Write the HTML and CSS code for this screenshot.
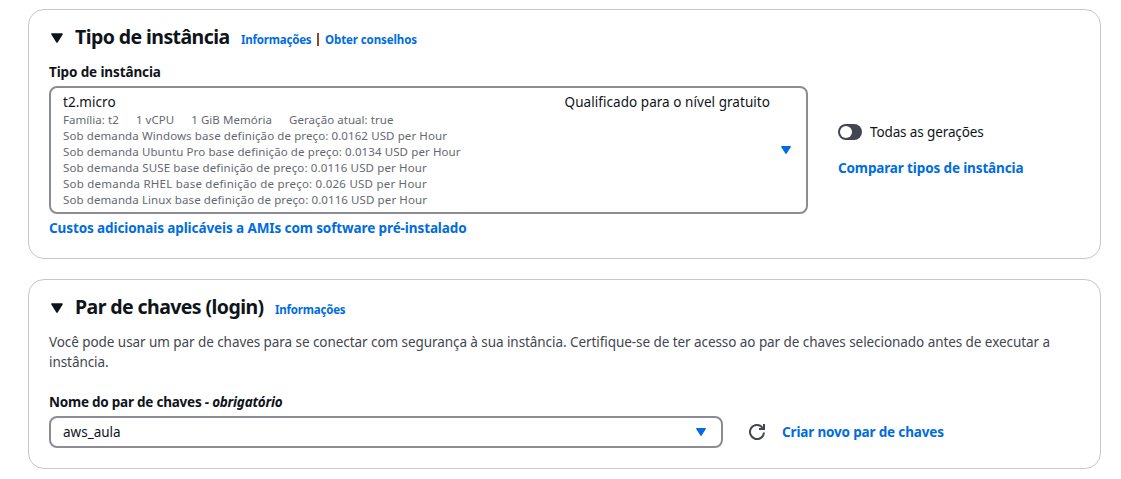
FILE: index.html
```html
<!DOCTYPE html>
<html lang="pt-BR">
<head>
<meta charset="utf-8">
<title>Executar uma instância</title>
<link rel="stylesheet" href="styles.css">
</head>
<body>
<main class="page">
  <section class="card card-type">
    <header class="card-header">
      <svg class="toggle-caret" width="12" height="10" viewBox="0 0 12 10"><path d="M1 1h10L6 9z" fill="#0f141a" stroke="#0f141a" stroke-width="1.6" stroke-linejoin="round"/></svg>
      <h2 class="title title-type">Tipo de instância</h2>
      <a class="info">Informações</a>
      <span class="divider"></span>
      <a class="info info-advice">Obter conselhos</a>
    </header>
    <div class="type-row">
      <div class="type-field">
        <div class="label label-type">Tipo de instância</div>
        <div class="select select-type">
          <div class="option">
            <div class="option-top"><span class="option-name">t2.micro</span><span class="option-tag">Qualificado para o nível gratuito</span></div>
            <div class="specs"><span>Família: t2</span><span>1 vCPU</span><span>1 GiB Memória</span><span>Geração atual: true</span></div>
            <div class="price">Sob demanda Windows base definição de preço: 0.0162 USD per Hour</div>
            <div class="price">Sob demanda Ubuntu Pro base definição de preço: 0.0134 USD per Hour</div>
            <div class="price price-suse">Sob demanda SUSE base definição de preço: 0.0116 USD per Hour</div>
            <div class="price price-rhel">Sob demanda RHEL base definição de preço: 0.026 USD per Hour</div>
            <div class="price">Sob demanda Linux base definição de preço: 0.0116 USD per Hour</div>
          </div>
          <svg class="select-caret" width="10" height="8" viewBox="0 0 10 8"><path d="M.7.7h8.6L5 7.3z" fill="#006ce0" stroke="#006ce0" stroke-width="1.2" stroke-linejoin="round"/></svg>
        </div>
        <a class="link link-costs">Custos adicionais aplicáveis a AMIs com software pré-instalado</a>
      </div>
      <div class="type-side">
        <div class="switch-row"><span class="switch"><span class="knob"></span></span><span class="switch-label">Todas as gerações</span></div>
        <a class="link link-compare">Comparar tipos de instância</a>
      </div>
    </div>
  </section>

  <section class="card card-key">
    <header class="card-header">
      <svg class="toggle-caret" width="12" height="10" viewBox="0 0 12 10"><path d="M1 1h10L6 9z" fill="#0f141a" stroke="#0f141a" stroke-width="1.6" stroke-linejoin="round"/></svg>
      <h2 class="title title-key">Par de chaves (login)</h2>
      <a class="info">Informações</a>
    </header>
    <p class="description"><span class="line-one">Você pode usar um par de chaves para se conectar com segurança à sua instância. Certifique-se de ter acesso ao par de chaves selecionado antes de executar a</span> instância.</p>
    <div class="label label-key">Nome do par de chaves <em class="required">- obrigatório</em></div>
    <div class="key-row">
      <div class="select select-key">
        <span class="key-name">aws_aula</span>
        <svg class="select-caret" width="10" height="8" viewBox="0 0 10 8"><path d="M.7.7h8.6L5 7.3z" fill="#006ce0" stroke="#006ce0" stroke-width="1.2" stroke-linejoin="round"/></svg>
      </div>
      <svg class="refresh" width="16" height="16" viewBox="0 0 16 16" fill="none" stroke="#424650" stroke-width="2"><path d="M15 8.5a7 7 0 1 1-2-5.4L15 5"/><path d="M15 0v5h-5"/></svg>
      <a class="link link-create">Criar novo par de chaves</a>
    </div>
  </section>
</main>
</body>
</html>
```
FILE: styles.css
```css
* { box-sizing: border-box; }
body {
  margin: 0;
  background: #fff;
  color: #0f141a;
  font: 14px/20px "Noto Sans", "Open Sans", sans-serif;
  white-space: nowrap;
}
.page { display: flex; flex-direction: column; gap: 20px; padding: 9px 20px 0 28px; }
.card { border: 1px solid #c6c6cd; border-radius: 16px; padding: 15px 20px 0; }
.card-type { height: 250px; }
.card-key { height: 190px; }
.card-header { display: flex; align-items: baseline; height: 24px; }
.toggle-caret { width: 12px; margin: 0 12px 0 2px; transform: translateY(-1px); }
.title { margin: 0; font-size: 19.5px; line-height: 24px; font-weight: 700; letter-spacing: -0.58px; }
.title-type { width: 166px; }
.title-key { width: 200px; }
.info { width: 71px; font-size: 11.5px; line-height: 20px; font-weight: 700; color: #006ce0; letter-spacing: -0.2px; }
.info-advice { letter-spacing: -0.1px; }
.divider { width: 2px; height: 13px; margin: 0 6px 0 5px; background: #8b4a30; align-self: center; transform: translateY(2px); }
.label { font-weight: 700; font-size: 13.5px; letter-spacing: -0.23px; }
.label-type { letter-spacing: -0.12px; }
.type-row { display: flex; gap: 30px; padding-top: 13px; }
.type-field { width: 759px; }
.select { display: flex; align-items: center; border: 2px solid #8c8c94; border-radius: 8px; }
.select-type { height: 128px; margin: 4px 0; padding: 0 15px 0 12px; }
.option { flex: 1; padding-bottom: 2px; }
.option-top { display: flex; justify-content: space-between; height: 22px; padding-right: 11px; line-height: 24px; font-size: 13.5px; letter-spacing: 0.05px; }
.specs { display: flex; gap: 17px; }
.specs, .price { font-size: 11.5px; line-height: 16px; color: #656871; letter-spacing: 0.1px; }
.specs { letter-spacing: 0.05px; }
.price-suse { letter-spacing: 0.13px; }
.price-rhel { letter-spacing: 0.23px; }
.link { display: block; color: #006ce0; font-weight: 700; font-size: 13.5px; letter-spacing: -0.1px; }
.type-side { padding-top: 60px; }
.switch-row { display: flex; align-items: center; gap: 8px; font-size: 13.5px; letter-spacing: -0.12px; }
.switch { width: 24px; height: 16px; padding: 2px; border-radius: 8px; background: #424650; }
.knob { display: block; width: 12px; height: 12px; border-radius: 50%; background: #fff; }
.link-compare { margin-top: 16px; letter-spacing: -0.13px; }
.link-create { letter-spacing: -0.16px; }
.description { margin: 13px 0 20px; color: #424650; white-space: normal; font-size: 13.5px; letter-spacing: -0.065px; }
.line-one { display: block; white-space: nowrap; }
.key-row { display: flex; align-items: center; margin-top: 4px; }
.key-name { font-size: 13.5px; }
.select-key { width: 674px; height: 32px; padding: 0 15px 0 12px; justify-content: space-between; }
.refresh { margin: 0 17px 0 26px; }
```
